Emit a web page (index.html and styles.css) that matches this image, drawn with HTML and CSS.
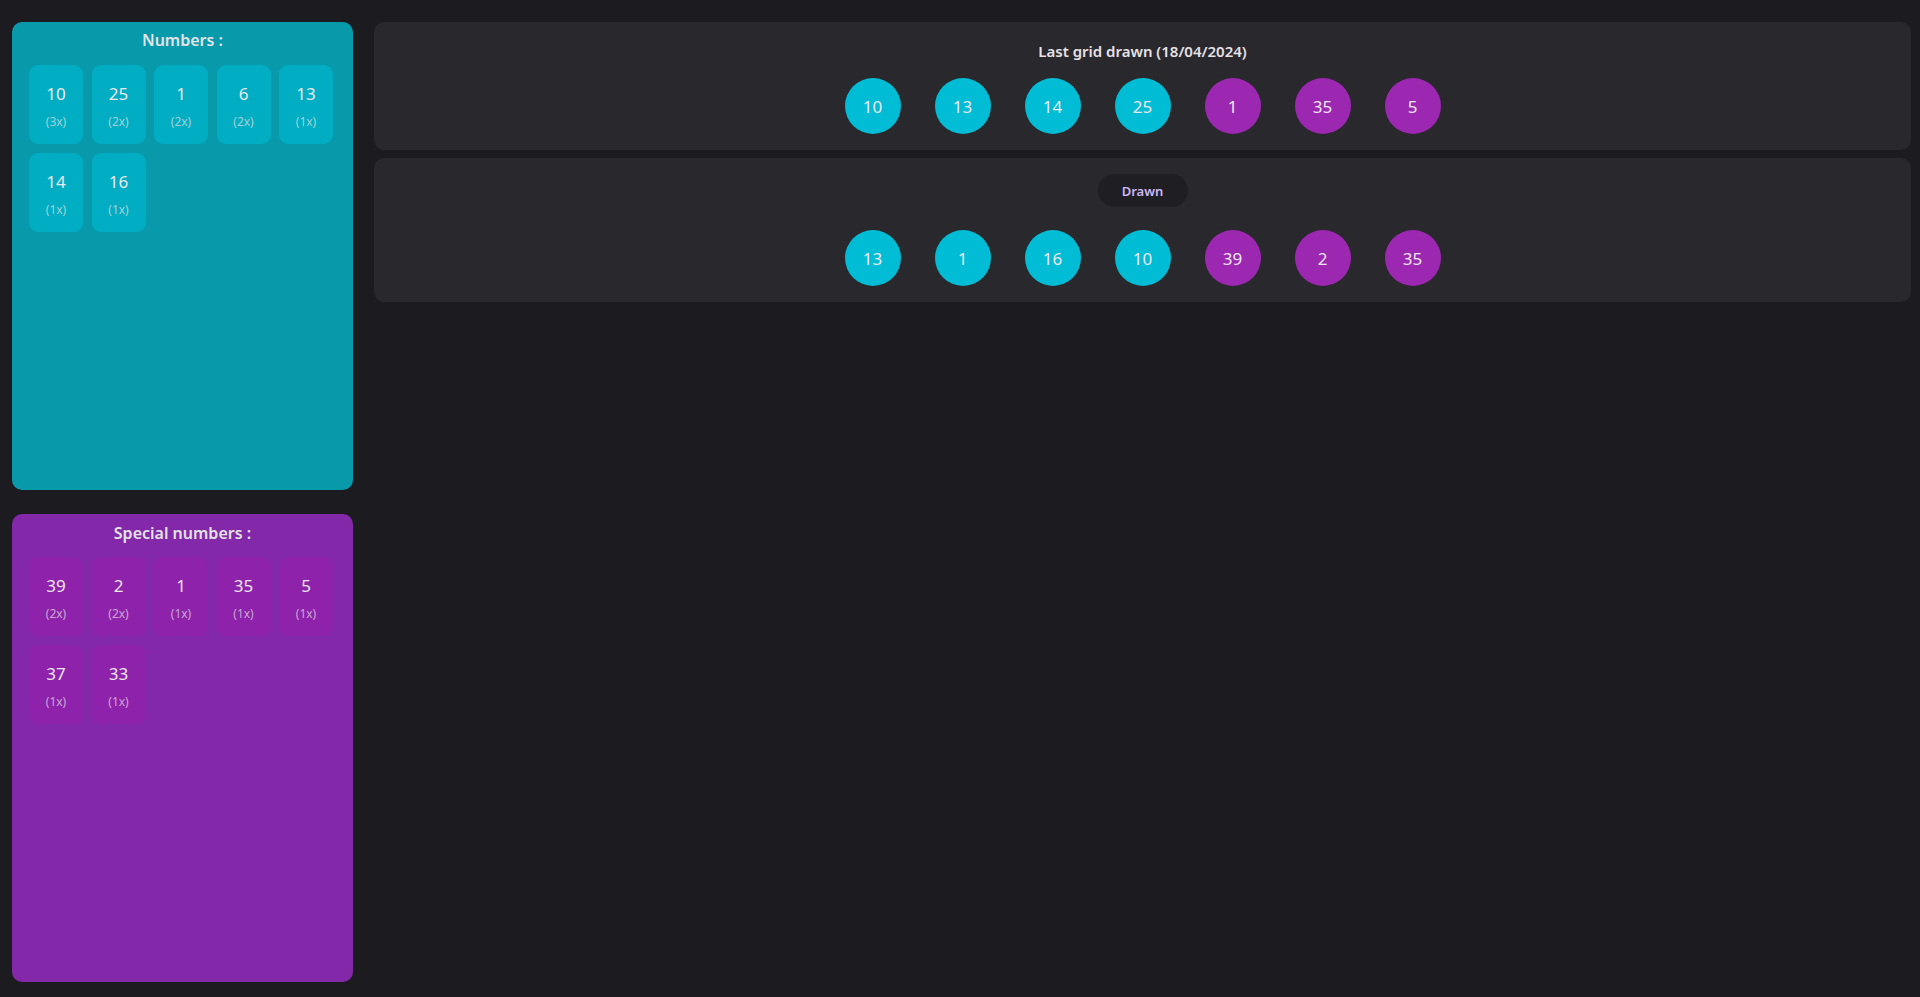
FILE: index.html
```html
<!DOCTYPE html>
<html lang="en">
<head>
<meta charset="utf-8">
<title>Lottery stats</title>
<link rel="stylesheet" href="styles.css">
</head>
<body>
<div class="page">
  <aside class="side">
    <section class="panel panel-main">
      <h2 class="panel-title">Numbers :</h2>
      <div class="tiles">
        <div class="tile"><span class="num">10</span><span class="cnt">(3x)</span></div>
        <div class="tile"><span class="num">25</span><span class="cnt">(2x)</span></div>
        <div class="tile"><span class="num">1</span><span class="cnt">(2x)</span></div>
        <div class="tile"><span class="num">6</span><span class="cnt">(2x)</span></div>
        <div class="tile"><span class="num">13</span><span class="cnt">(1x)</span></div>
        <div class="tile"><span class="num">14</span><span class="cnt">(1x)</span></div>
        <div class="tile"><span class="num">16</span><span class="cnt">(1x)</span></div>
      </div>
    </section>
    <section class="panel panel-special">
      <h2 class="panel-title">Special numbers :</h2>
      <div class="tiles">
        <div class="tile"><span class="num">39</span><span class="cnt">(2x)</span></div>
        <div class="tile"><span class="num">2</span><span class="cnt">(2x)</span></div>
        <div class="tile"><span class="num">1</span><span class="cnt">(1x)</span></div>
        <div class="tile"><span class="num">35</span><span class="cnt">(1x)</span></div>
        <div class="tile"><span class="num">5</span><span class="cnt">(1x)</span></div>
        <div class="tile"><span class="num">37</span><span class="cnt">(1x)</span></div>
        <div class="tile"><span class="num">33</span><span class="cnt">(1x)</span></div>
      </div>
    </section>
  </aside>
  <main class="content">
    <section class="card card-last">
      <h3 class="card-title">Last grid drawn (18/04/2024)</h3>
      <div class="balls">
        <span class="ball ball-main">10</span>
        <span class="ball ball-main">13</span>
        <span class="ball ball-main">14</span>
        <span class="ball ball-main">25</span>
        <span class="ball ball-special">1</span>
        <span class="ball ball-special">35</span>
        <span class="ball ball-special">5</span>
      </div>
    </section>
    <section class="card card-drawn">
      <span class="chip">Drawn</span>
      <div class="balls">
        <span class="ball ball-main">13</span>
        <span class="ball ball-main">1</span>
        <span class="ball ball-main">16</span>
        <span class="ball ball-main">10</span>
        <span class="ball ball-special">39</span>
        <span class="ball ball-special">2</span>
        <span class="ball ball-special">35</span>
      </div>
    </section>
  </main>
</div>
</body>
</html>
```
FILE: styles.css
```css
* { box-sizing: border-box; }

html, body {
  margin: 0;
  height: 100%;
  background: #1c1b1f;
  color: #e6e1e5;
  font-family: "Noto Sans", "Open Sans", sans-serif;
}

.page {
  display: flex;
  align-items: flex-start;
  gap: 21px;
  padding: 22px 9px 15px 12px;
  height: 100%;
}

.side {
  width: 341px;
  flex: none;
  display: flex;
  flex-direction: column;
  gap: 24px;
}

.panel {
  height: 468px;
  border-radius: 10px;
  padding: 6px 17px 0 17px;
}

.panel-main { background: #0899ab; }
.panel-special { background: #8228a8; }

.panel-title {
  margin: 0 0 13px;
  text-align: center;
  font-size: 16px;
  line-height: 24px;
  font-weight: 600;
  color: #e3e3e6;
}

.panel-special .panel-title {
  padding-top: 1px;
  margin-bottom: 12px;
}

.tiles {
  display: flex;
  flex-wrap: wrap;
  column-gap: 8.5px;
  row-gap: 9px;
}

.tile {
  width: 54px;
  height: 79px;
  border-radius: 9px;
  display: flex;
  flex-direction: column;
  align-items: center;
  justify-content: center;
  gap: 8px;
  padding-top: 2px;
}

.panel-main .tile { background: #00adc2; }
.panel-special .tile { background: #8e22aa; }

.num {
  font-size: 17px;
  line-height: 24px;
  color: #ebe8ec;
}

.cnt {
  font-size: 12px;
  line-height: 16px;
  color: rgba(230, 225, 229, 0.7);
}

.content {
  flex: 1;
  display: flex;
  flex-direction: column;
  gap: 8px;
}

.card {
  background: #29282d;
  border-radius: 10px;
  display: flex;
  flex-direction: column;
  align-items: center;
}

.card-last {
  height: 128px;
  padding-top: 17px;
}

.card-title {
  margin: 0 0 15px;
  font-size: 15px;
  line-height: 24px;
  font-weight: 600;
  color: #e6e1e5;
}

.card-drawn {
  height: 144px;
  padding-top: 16px;
}

.chip {
  width: 90px;
  height: 33px;
  border-radius: 17px;
  background: #1f1e23;
  color: #cdb8f5;
  font-size: 13px;
  font-weight: 600;
  display: flex;
  align-items: center;
  justify-content: center;
  margin-bottom: 23px;
}

.balls {
  display: flex;
  gap: 34px;
}

.ball {
  width: 56px;
  height: 56px;
  border-radius: 50%;
  display: flex;
  align-items: center;
  justify-content: center;
  font-size: 17px;
  color: #ebe8ec;
}

.ball-main { background: #00bcd4; }
.ball-special { background: #9c27b0; }
```
